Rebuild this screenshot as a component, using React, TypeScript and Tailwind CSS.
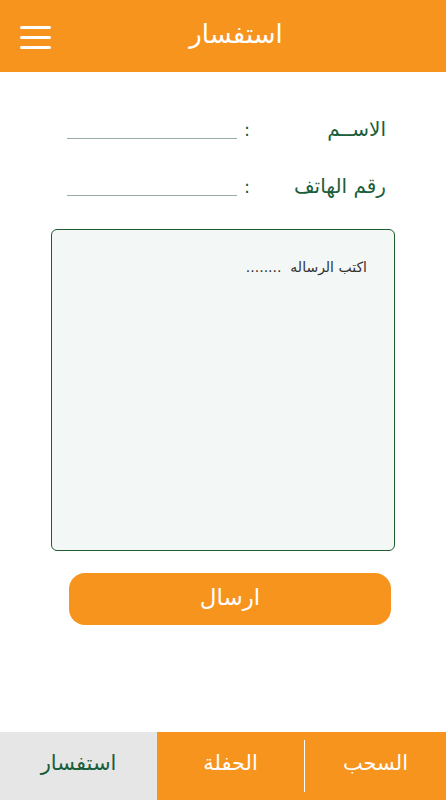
import React from "react";

const F = { fontFamily: '"DejaVu Sans", "Noto Sans", sans-serif' };

export default function App() {
  return (
    <div className="w-[446px] h-[800px] bg-white flex flex-col" style={F}>
      <header className="h-[72px] bg-[#f7941e] relative flex items-center justify-center">
        <div className="absolute left-[20px] top-[26px] flex flex-col gap-[7px]">
          <span className="block w-[31px] h-[3px] bg-white rounded-sm" />
          <span className="block w-[31px] h-[3px] bg-white rounded-sm" />
          <span className="block w-[31px] h-[3px] bg-white rounded-sm" />
        </div>
        <h1 dir="rtl" className="text-white text-[26px] leading-none pb-[4px] ml-[26px]">استفسار</h1>
      </header>

      <main className="flex-1 flex flex-col">
        <div dir="rtl" className="flex items-end mt-[42px] pr-[60px] h-[25px]">
          <span className="w-[136px] text-[20px] leading-none text-[#1b5e3b]">الاســم</span>
          <span className="w-[13px] text-[18px] leading-none text-[#1b5e3b]">:</span>
          <span className="w-[170px] h-[1px] bg-[#95aba4]" />
        </div>
        <div dir="rtl" className="flex items-end mt-[32px] pr-[60px] h-[25px]">
          <span className="w-[136px] text-[20px] leading-none text-[#1b5e3b]">رقم الهاتف</span>
          <span className="w-[13px] text-[18px] leading-none text-[#1b5e3b]">:</span>
          <span className="w-[170px] h-[1px] bg-[#95aba4]" />
        </div>

        <div className="mt-[33px] ml-[51px] w-[344px] h-[322px] rounded-[6px] border border-[#1f5c2e] bg-[#f3f7f5] pt-[25px] pr-[27px]" dir="rtl">
          <span className="text-[14px] text-[#333]">اكتب الرساله&nbsp; ........</span>
        </div>

        <button className="mt-[22px] ml-[69px] w-[322px] h-[52px] rounded-[16px] bg-[#f7941e] text-white text-[23px] leading-none pb-[4px]">
          <span dir="rtl">ارسال</span>
        </button>
      </main>

      <nav className="h-[68px] flex">
        <div className="w-[157px] bg-[#e6e6e6] flex items-center justify-center text-[21px] text-[#1b5e3b] pb-[4px]" dir="rtl">استفسار</div>
        <div className="flex-1 bg-[#f7941e] flex items-center">
          <div className="w-[147px] flex items-center justify-center text-white text-[21px] pb-[4px]" dir="rtl">الحفلة</div>
          <div className="w-[1px] h-[52px] bg-white" />
          <div className="flex-1 flex items-center justify-center text-white text-[21px] pb-[4px]" dir="rtl">السحب</div>
        </div>
      </nav>
    </div>
  );
}
